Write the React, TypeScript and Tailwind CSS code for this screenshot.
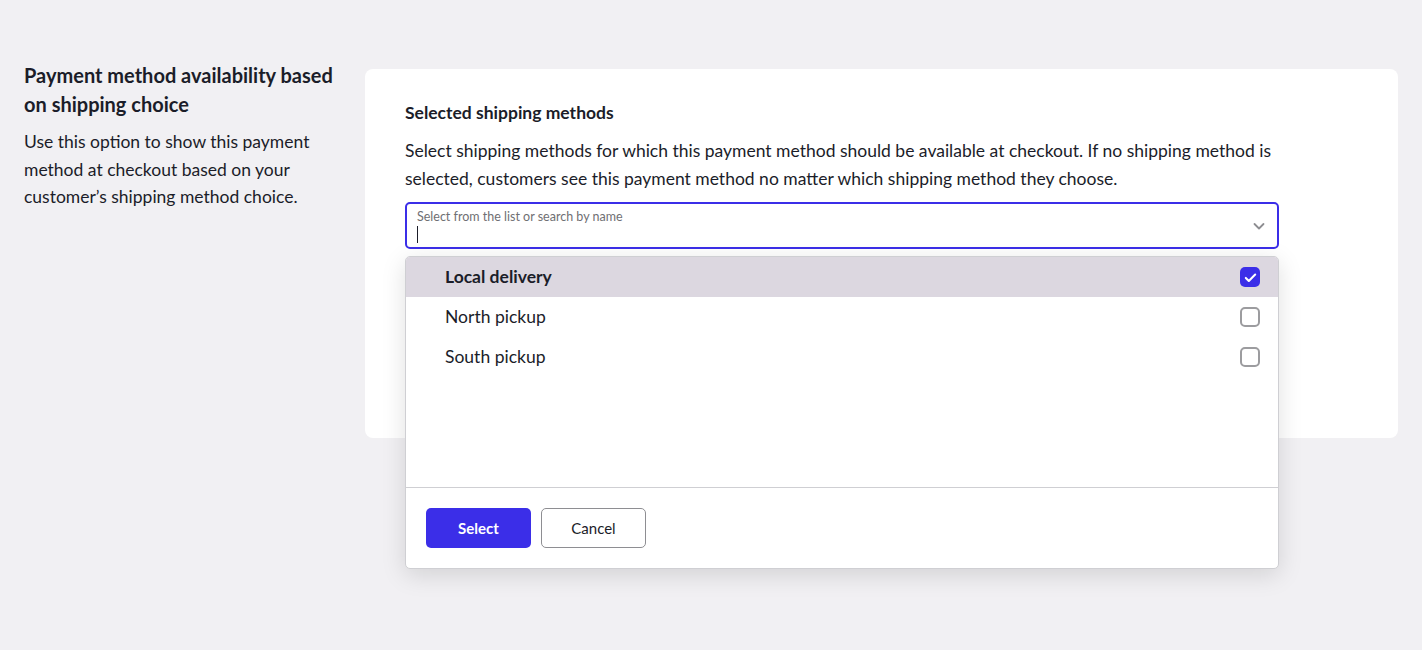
import React from 'react';

const rows = [
  { label: 'Local delivery', checked: true },
  { label: 'North pickup', checked: false },
  { label: 'South pickup', checked: false },
];

function Checkbox({ checked }: { checked: boolean }) {
  if (checked) {
    return (
      <span className="flex h-[20px] w-[20px] items-center justify-center rounded-[5px] bg-[#3b2ee8]">
        <svg viewBox="0 0 16 16" className="h-[15px] w-[15px]" fill="none" stroke="#ffffff" strokeWidth="2.2" strokeLinecap="round" strokeLinejoin="round">
          <path d="M3 8.5l3.2 3.2L13 4.8" />
        </svg>
      </span>
    );
  }
  return <span className="block h-[20px] w-[20px] rounded-[5px] border-2 border-[#9c9c9f] bg-white" />;
}

export default function App() {
  return (
    <div className="min-h-[650px] bg-[#f1f0f3] font-['Lato','Liberation_Sans',sans-serif] text-[#1b1d29]">
      <div className="flex gap-6 pl-6 pr-6 pt-[61px]">
        <div className="w-[317px] shrink-0">
          <h2 className="text-[20px] font-bold leading-[29px]">
            Payment method availability based on shipping choice
          </h2>
          <p className="mt-[9px] text-[17.5px] leading-[27.5px]">
            Use this option to show this payment method at checkout based on your customer’s shipping method choice.
          </p>
        </div>

        <div className="relative mt-[8px] h-[369px] flex-1 rounded-lg bg-white px-10 pt-[32px]">
          <h3 className="text-[17.5px] font-bold leading-[24px]">Selected shipping methods</h3>
          <p className="mt-[12px] max-w-[880px] text-[17.5px] leading-[27.5px]">
            Select shipping methods for which this payment method should be available at checkout. If no shipping method is selected, customers see this payment method no matter which shipping method they choose.
          </p>

          <div className="relative mt-[10px] w-[874px]">
            <div className="flex h-[47px] items-center rounded-[5px] border-2 border-[#3b2ee8] bg-white pl-[10px] pr-[10px]">
              <div className="flex-1">
                <div className="text-[12.5px] leading-[15px] text-[#6f6f73]">Select from the list or search by name</div>
                <div className="mt-[2px] h-[17px] w-[1px] bg-[#1b1d29]" />
              </div>
              <svg viewBox="0 0 16 16" className="h-[16px] w-[16px]" fill="none" stroke="#8d8d91" strokeWidth="1.8" strokeLinecap="round" strokeLinejoin="round">
                <path d="M3.5 6l4.5 4.5L12.5 6" />
              </svg>
            </div>

            <div className="absolute left-0 top-[54px] z-10 w-[874px] overflow-hidden rounded-[5px] border border-[#cfcfd3] bg-white shadow-[0_6px_24px_rgba(0,0,0,0.13)]">
              <div className="h-[230px]">
                {rows.map((r) => (
                  <div
                    key={r.label}
                    className={
                      r.checked
                        ? 'flex h-[40px] items-center justify-between bg-[#dcd7e0] pl-[39px] pr-[18px]'
                        : 'flex h-[40px] items-center justify-between pl-[39px] pr-[18px]'
                    }
                  >
                    <span className={r.checked ? 'pt-[1px] text-[17.5px] font-bold' : 'pt-[1px] text-[17.5px]'}>{r.label}</span>
                    <Checkbox checked={r.checked} />
                  </div>
                ))}
              </div>
              <div className="flex gap-[10px] border-t border-[#cfcfd3] px-5 py-5">
                <button className="h-[40px] w-[105px] rounded-[5px] bg-[#3b2ee8] text-[15px] font-bold text-white">
                  Select
                </button>
                <button className="h-[40px] w-[105px] rounded-[5px] border border-[#8e8e92] bg-white text-[15px] text-[#1b1d29]">
                  Cancel
                </button>
              </div>
            </div>
          </div>
        </div>
      </div>
    </div>
  );
}
